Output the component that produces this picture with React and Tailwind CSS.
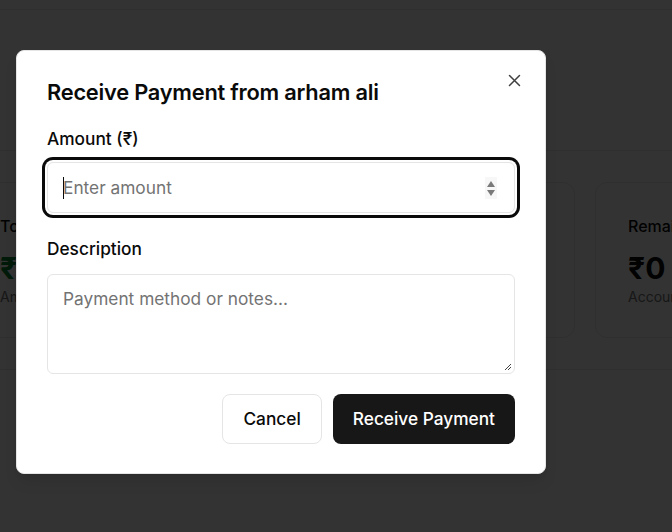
import React from 'react'

const font = { fontFamily: 'Inter, "Noto Sans", sans-serif' }

const Card = ({ title, value, note, valueClass, className }) => (
  <div className={`shrink-0 h-[156px] rounded-xl border border-[#e8e8e8] bg-white px-8 pt-[31px] ${className}`}>
    <div className="text-base font-medium leading-6 text-[#0a0a0a]">{title}</div>
    <div className={`mt-[12px] text-3xl font-bold leading-9 ${valueClass}`}>{value}</div>
    <div className="mt-px text-sm text-[#737373]">{note}</div>
  </div>
)

const App = () => {
  return (
    <div style={font} className="relative h-[532px] w-[672px] overflow-hidden bg-white">
      {/* page behind the overlay */}
      <div className="h-[10px] border-b border-[#e8e8e8]" />
      <div className="h-[141px] border-b border-[#e8e8e8]" />
      <div className="flex gap-5 border-b border-[#e8e8e8] pb-[31px] pt-[31px] -ml-[33px]">
        <Card title="Total Received" value="₹0" note="Amount received" valueClass="text-green-700" className="w-[608px]" />
        <Card title="Remaining Balance" value="₹0" note="Account balance" valueClass="text-[#0a0a0a]" className="w-[300px]" />
      </div>

      {/* overlay */}
      <div className="absolute inset-0 bg-black/80" />

      {/* dialog */}
      <div className="absolute left-[16px] top-[50px] w-[530px] rounded-lg border border-[#e5e5e5] bg-white px-[30px] pb-[29px] pt-[27px] shadow-lg">
        <button className="absolute right-[24px] top-[23px] text-[#404040]">
          <svg width="13" height="13" viewBox="0 0 13 13" fill="none" stroke="currentColor" strokeWidth="1.5" strokeLinecap="round">
            <path d="M1.5 1.5 L11.5 11.5 M11.5 1.5 L1.5 11.5" />
          </svg>
        </button>
        <h2 className="text-[21.8px] font-semibold leading-7 tracking-[-0.01em] text-[#0a0a0a]">Receive Payment from arham ali</h2>

        <div className="mt-[20px] text-[17.3px] font-medium leading-[26px] text-[#0a0a0a]">Amount (₹)</div>
        <div className="mt-[10px] flex h-[51px] items-center rounded-md border border-[#e5e5e5] bg-white pl-[15px] pr-[16px] ring-[3px] ring-[#0a0a0a] ring-offset-[2px]">
          <span className="-mr-px h-[22px] w-px bg-[#0a0a0a]" />
          <span className="flex-1 text-[17.3px] text-[#737373]">Enter amount</span>
          <svg width="12" height="22" viewBox="0 0 12 22" className="mr-[1px]">
            <rect width="12" height="22" fill="#f7f7f7" />
            <path d="M6 4 L10 10 L2 10 Z" fill="#7a7a7a" />
            <path d="M2 13 L10 13 L6 19 Z" fill="#7a7a7a" />
          </svg>
        </div>

        <div className="mt-[23px] text-[17.3px] font-medium leading-[26px] text-[#0a0a0a]">Description</div>
        <div className="relative mt-[12px] h-[100px] rounded-md border border-[#e5e5e5] bg-white pl-[15px] pt-[11px]">
          <span className="text-[17.3px] leading-[26px] text-[#737373]">Payment method or notes...</span>
          <svg width="8" height="8" viewBox="0 0 8 8" className="absolute bottom-[2px] right-[2px]" stroke="#444" strokeWidth="1">
            <path d="M1 7 L7 1 M4 7 L7 4" />
          </svg>
        </div>

        <div className="mt-[20px] flex justify-end gap-[11px]">
          <button className="h-[50px] rounded-lg border border-[#e5e5e5] bg-white px-5 text-[17.3px] font-medium text-[#0a0a0a]">Cancel</button>
          <button className="h-[50px] rounded-lg bg-[#171717] px-5 text-[17.3px] font-medium text-white">Receive Payment</button>
        </div>
      </div>
    </div>
  )
}

export default App
